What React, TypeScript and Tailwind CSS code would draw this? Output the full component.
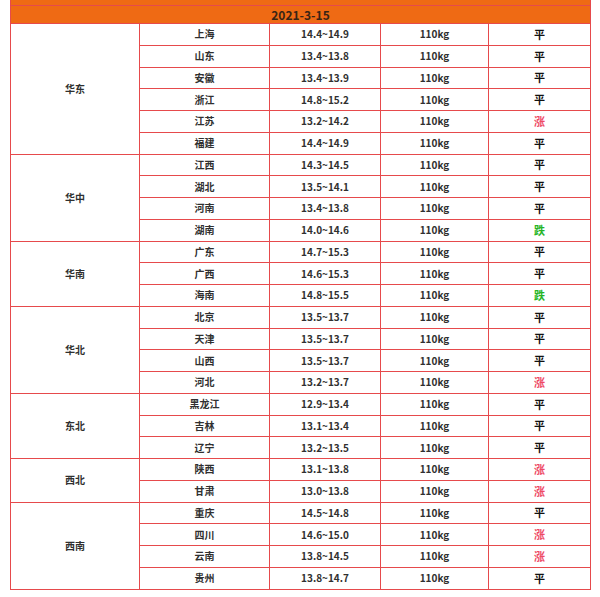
import React from "react";

type Row = { city: string; price: string; trend: "平" | "涨" | "跌" };
type Region = { name: string; rows: Row[] };

const regions: Region[] = [
  {
    name: "华东",
    rows: [
      { city: "上海", price: "14.4~14.9", trend: "平" },
      { city: "山东", price: "13.4~13.8", trend: "平" },
      { city: "安徽", price: "13.4~13.9", trend: "平" },
      { city: "浙江", price: "14.8~15.2", trend: "平" },
      { city: "江苏", price: "13.2~14.2", trend: "涨" },
      { city: "福建", price: "14.4~14.9", trend: "平" },
    ],
  },
  {
    name: "华中",
    rows: [
      { city: "江西", price: "14.3~14.5", trend: "平" },
      { city: "湖北", price: "13.5~14.1", trend: "平" },
      { city: "河南", price: "13.4~13.8", trend: "平" },
      { city: "湖南", price: "14.0~14.6", trend: "跌" },
    ],
  },
  {
    name: "华南",
    rows: [
      { city: "广东", price: "14.7~15.3", trend: "平" },
      { city: "广西", price: "14.6~15.3", trend: "平" },
      { city: "海南", price: "14.8~15.5", trend: "跌" },
    ],
  },
  {
    name: "华北",
    rows: [
      { city: "北京", price: "13.5~13.7", trend: "平" },
      { city: "天津", price: "13.5~13.7", trend: "平" },
      { city: "山西", price: "13.5~13.7", trend: "平" },
      { city: "河北", price: "13.2~13.7", trend: "涨" },
    ],
  },
  {
    name: "东北",
    rows: [
      { city: "黑龙江", price: "12.9~13.4", trend: "平" },
      { city: "吉林", price: "13.1~13.4", trend: "平" },
      { city: "辽宁", price: "13.2~13.5", trend: "平" },
    ],
  },
  {
    name: "西北",
    rows: [
      { city: "陕西", price: "13.1~13.8", trend: "涨" },
      { city: "甘肃", price: "13.0~13.8", trend: "涨" },
    ],
  },
  {
    name: "西南",
    rows: [
      { city: "重庆", price: "14.5~14.8", trend: "平" },
      { city: "四川", price: "14.6~15.0", trend: "涨" },
      { city: "云南", price: "13.8~14.5", trend: "涨" },
      { city: "贵州", price: "13.8~14.7", trend: "平" },
    ],
  },
];

// rowspan per region size
const spans: Record<number, string> = {
  2: "row-span-2",
  3: "row-span-3",
  4: "row-span-4",
  6: "row-span-6",
};

const trendColor = {
  平: "text-[#111111]",
  涨: "text-[#ee4a66]",
  跌: "text-[#26b426]",
};

const cell = "bg-white flex items-center justify-center";

export default function App() {
  return (
    <div className="w-[600px] h-[597px] bg-white font-['Noto_Sans_CJK_SC','Liberation_Sans',sans-serif]">
      <div className="ml-[10px] w-[581px] grid grid-cols-[128px_129px_110px_107px_101px] grid-rows-[5px_17px] auto-rows-[20.75px] gap-px bg-[#e64a4c] px-px pb-px text-[10px] font-bold text-[#303030] leading-none">
        <div className="col-span-5 bg-[#ef6a14]" />
        <div className="col-span-5 bg-[#ef6a14] flex items-center justify-center text-[12px] text-[#3a2414]">
          2021-3-15
        </div>
        {regions.map((region) => (
          <React.Fragment key={region.name}>
            <div className={`${cell} ${spans[region.rows.length]}`}>
              {region.name}
            </div>
            {region.rows.map((r) => (
              <React.Fragment key={r.city}>
                <div className={`${cell} col-start-2`}>{r.city}</div>
                <div className={cell}>{r.price}</div>
                <div className={cell}>110kg</div>
                <div className={`${cell} text-[11px] ${trendColor[r.trend]}`}>
                  {r.trend}
                </div>
              </React.Fragment>
            ))}
          </React.Fragment>
        ))}
      </div>
    </div>
  );
}
